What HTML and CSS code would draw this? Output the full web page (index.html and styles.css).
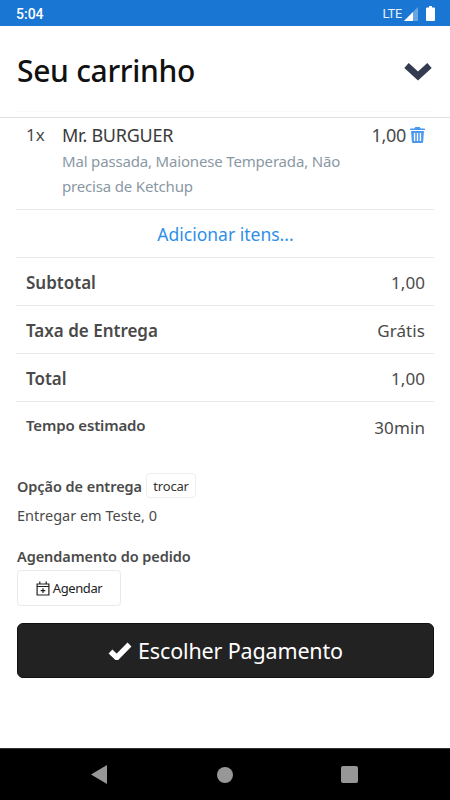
FILE: index.html
```html
<!DOCTYPE html>
<html lang="pt">
<head>
<meta charset="utf-8">
<title>Seu carrinho</title>
<link rel="stylesheet" href="styles.css">
</head>
<body>
<div class="phone">
  <header class="statusbar">
    <span class="clock">5:04</span>
    <div class="status-icons">
      <span class="lte">LTE</span>
      <svg class="signal" width="14" height="14" viewBox="0 0 14 14"><path d="M14 0V14H0Z" fill="#fff" opacity=".35"/><path d="M9 5V14H0Z" fill="#fff"/></svg>
      <svg class="battery" width="9" height="15" viewBox="0 0 9 15"><path d="M3 0H6V1.500H8A1 1 0 0 1 9 2.500V14A1 1 0 0 1 8 15H1A1 1 0 0 1 0 14V2.500A1 1 0 0 1 1 1.500H3Z" fill="#fff"/></svg>
    </div>
  </header>
  <main class="content">
    <div class="title-row">
      <div class="title-inner">
        <h1>Seu carrinho</h1>
        <svg class="chevron" width="30" height="20" viewBox="0 0 30 20"><path d="M3.500 4.500 15 15 26.500 4.500" fill="none" stroke="#343a50" stroke-width="6.500"/></svg>
      </div>
    </div>
    <div class="list">
      <div class="row item">
        <span class="qty">1x</span>
        <div class="item-main">
          <div class="item-name">Mr. BURGUER</div>
          <div class="item-note">Mal passada, Maionese Temperada, Não precisa de Ketchup</div>
        </div>
        <div class="item-price">1,00
          <svg class="trash" width="15" height="16" viewBox="0 0 14 16" preserveAspectRatio="none"><path fill="#4a97ee" fill-rule="evenodd" d="M5 0H9L10 1.500H13.300A.7.7 0 0 1 14 2.200V3H0V2.200A.7.7 0 0 1 .7 1.500H4ZM1 4H13L12.300 14.500A1.500 1.500 0 0 1 10.800 16H3.200A1.500 1.500 0 0 1 1.700 14.500ZM3.600 6V14H4.900V6ZM6.350 6V14H7.650V6ZM9.100 6V14H10.400V6Z"/></svg>
        </div>
      </div>
      <div class="row add"><a class="add-link">Adicionar itens...</a></div>
      <div class="row total"><b>Subtotal</b><span>1,00</span></div>
      <div class="row total"><b>Taxa de Entrega</b><span>Grátis</span></div>
      <div class="row total"><b>Total</b><span>1,00</span></div>
      <div class="row time"><b>Tempo estimado</b><span>30min</span></div>
    </div>
    <section class="delivery">
      <div class="delivery-head"><b>Opção de entrega</b><button class="small-btn">trocar</button></div>
      <p class="address">Entregar em Teste, 0</p>
    </section>
    <section class="schedule">
      <b class="schedule-label">Agendamento do pedido</b>
      <button class="schedule-btn">
        <svg width="14" height="15" viewBox="0 0 14 15"><path fill="none" stroke="#222" stroke-width="1.200" d="M1.100 3H12.900V14H1.100ZM1.100 5.500H12.900M3.800.5V3.500M10.200.5V3.500M7 7.300V12M4.700 9.600H9.300"/></svg>
        Agendar
      </button>
    </section>
    <button class="pay-btn">
      <svg width="24" height="19" viewBox="0 0 24 19"><path d="M2.500 10.500 8.800 16.500 21.500 3.500" fill="none" stroke="#fff" stroke-width="5.500"/></svg>
      Escolher Pagamento
    </button>
  </main>
  <nav class="navbar">
    <svg width="16" height="19" viewBox="0 0 16 19"><path d="M16 0V19L0 9.500Z" fill="#979797"/></svg>
    <span class="home"></span>
    <span class="recent"></span>
  </nav>
</div>
</body>
</html>
```
FILE: styles.css
```css
* { box-sizing: border-box; }
html, body { margin: 0; padding: 0; }
body { font-family: "Noto Sans", "Open Sans", sans-serif; background: #fff; }
button { font-family: inherit; }
.phone { width: 450px; height: 800px; display: flex; flex-direction: column; overflow: hidden; }
.statusbar { height: 26px; flex: none; background: #1976d2; color: #fff; display: flex; align-items: center; justify-content: space-between; padding: 1px 15px 0 16px; }
.clock { font: 500 14px Roboto, sans-serif; }
.status-icons { display: flex; align-items: center; gap: 2px; }
.lte { font: 400 13px Roboto, sans-serif; letter-spacing: -.3px; opacity: .9; }
.battery { margin-left: 6px; }
.content { flex: 1; display: flex; flex-direction: column; }
.title-row { height: 92px; flex: none; padding: 0 16px; border-bottom: 1px solid #e2e2e2; }
.title-inner { height: 86px; display: flex; align-items: center; justify-content: space-between; padding: 5px 1px 0; border-bottom: 1px solid #fafafa; }
h1 { margin: 0; font-size: 30px; line-height: 36px; font-weight: 500; color: #111; letter-spacing: -.3px; }
.list { padding: 0 16px; color: #4a4a4a; }
.row { display: flex; justify-content: space-between; padding: 0 9px 0 10px; border-bottom: 1px solid #eaeaea; }
.item { height: 92px; padding-top: 4px; justify-content: flex-start; }
.qty { width: 36px; font-size: 17px; line-height: 26px; }
.item-main { width: 290px; }
.item-name { font-size: 18px; line-height: 26px; color: #3a3a3a; letter-spacing: -.25px; }
.item-note { font-size: 15px; line-height: 25px; margin-top: 1px; color: #8a98a4; letter-spacing: -.17px; }
.item-price { flex: 1; display: flex; justify-content: flex-end; align-items: flex-start; gap: 4px; font-size: 18px; line-height: 26px; white-space: nowrap; letter-spacing: -.3px; }
.trash { margin-top: 5px; flex: none; }
.add { height: 48px; align-items: center; justify-content: center; }
.add-link { color: #2f8fe8; font-size: 17.500px; }
.total { height: 48px; padding-top: 1px; align-items: center; font-size: 17px; letter-spacing: .08px; }
.total b { font-weight: 600; font-size: 17px; letter-spacing: 0; }
.time { height: 50px; align-items: center; border-bottom: 0; font-size: 17px; letter-spacing: .1px; }
.time b { font-weight: 600; font-size: 15px; letter-spacing: -.15px; margin-top: -5px; }
.delivery { padding: 21px 17px 0; color: #4a4a4a; }
.delivery-head { display: flex; align-items: center; gap: 4px; font-size: 14.500px; letter-spacing: -.06px; }
.delivery-head b { font-weight: 600; }
.small-btn { height: 25px; width: 50px; padding: 0; background: #fff; border: 1px solid #eee; border-radius: 4px; font-size: 13px; color: #333; letter-spacing: -.2px; }
.address { margin: 6px 0 0; font-size: 14.500px; line-height: 22px; }
.schedule { padding: 20px 17px 0; color: #4a4a4a; }
.schedule-label { display: block; font-weight: 600; font-size: 14.500px; line-height: 20px; letter-spacing: -.06px; }
.schedule-btn { margin-top: 4px; width: 104px; height: 36px; background: #fff; border: 1px solid #eaeaea; border-radius: 4px; font-size: 13px; color: #222; display: flex; align-items: center; justify-content: center; gap: 3px; letter-spacing: -.4px; padding: 0; }
.pay-btn { margin: 17px 16px 0 17px; height: 55px; background: #222; color: #fff; border: 1px solid #111; border-radius: 6px; font-size: 21.500px; display: flex; align-items: center; justify-content: center; gap: 6px; letter-spacing: -.15px; padding: 0; }
.navbar { height: 52px; flex: none; background: #000; border-top: 1px solid #333; display: flex; align-items: center; padding: 0 92px 0 91px; justify-content: space-between; }
.home { width: 16px; height: 16px; border-radius: 50%; background: #979797; margin-left: 2px; }
.recent { width: 17px; height: 17px; border-radius: 2px; background: #979797; }
```
